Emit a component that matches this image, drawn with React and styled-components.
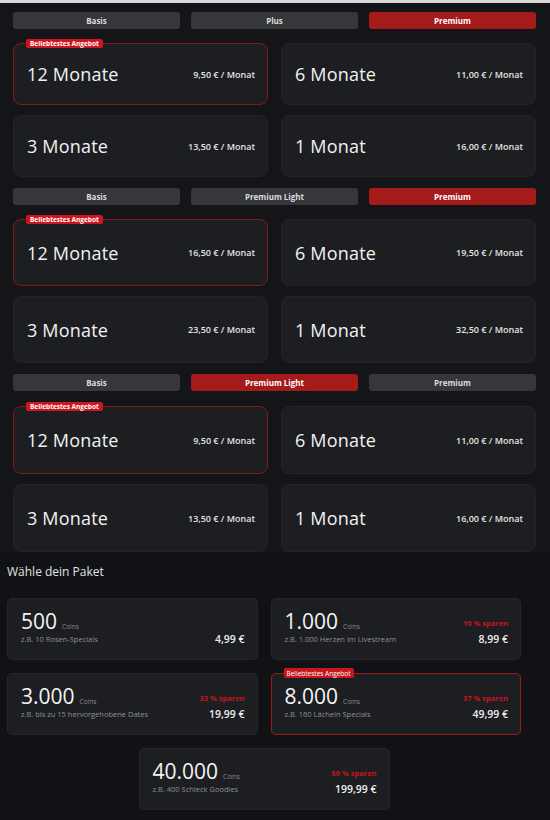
import React from "react";
import styled, { createGlobalStyle } from "styled-components";

const GlobalStyle = createGlobalStyle`
  html, body {
    margin: 0;
    padding: 0;
    background: #131417;
  }
  * {
    box-sizing: border-box;
  }
`;

const Page = styled.div`
  width: 550px;
  min-height: 820px;
  background: #141518;
  font-family: "Open Sans", "Liberation Sans", sans-serif;
  color: #f0f0f0;
`;

const TopStrip = styled.div`
  height: 3px;
  background: #d9d9d9;
`;

const PlanSection = styled.section`
  display: flex;
  flex-direction: column;
  gap: ${p => p.gap}px;
  padding: ${p => p.top}px 14px 0 13px;
`;

const Tabs = styled.div`
  display: grid;
  grid-template-columns: repeat(3, 1fr);
  gap: 11px;
`;

const Tab = styled.div`
  height: 17px;
  border-radius: 3px;
  background: ${p => (p.active ? "#a51b1b" : "#35373a")};
  color: ${p => (p.active ? "#ffffff" : "#dcdcdc")};
  font-size: 8px;
  font-weight: 700;
  display: flex;
  align-items: center;
  justify-content: center;
`;

const CardGrid = styled.div`
  display: grid;
  grid-template-columns: 1fr 1fr;
  column-gap: 13px;
  row-gap: 10px;
`;

const PlanCard = styled.div`
  position: relative;
  height: ${p => p.h}px;
  border-radius: 8px;
  background: #1c1e21;
  border: 1px solid ${p => (p.featured ? "#821a1a" : "#222427")};
  display: flex;
  align-items: center;
  justify-content: space-between;
  padding: 0 12px 0 13px;
`;

const Badge = styled.span`
  position: absolute;
  top: -5px;
  left: 12px;
  height: 9px;
  padding: 0 4px;
  border-radius: 2px;
  background: #cf161e;
  color: #fff;
  font-size: 6.5px;
  font-weight: 700;
  display: flex;
  align-items: center;
  white-space: nowrap;
`;

const Duration = styled.span`
  font-size: 18px;
  font-weight: 400;
  color: #f2f2f2;
  letter-spacing: 0.2px;
`;

const MonthPrice = styled.span`
  font-size: 9px;
  font-weight: 600;
  color: #e4e4e4;
`;

const CoinSection = styled.section`
  background: #111215;
  padding: 12px 29px 10px 7px;
`;

const Title = styled.h2`
  margin: 0 0 18px;
  font-size: 12px;
  line-height: 16px;
  font-weight: 400;
  color: #e2e2e2;
`;

const CoinGrid = styled.div`
  display: grid;
  grid-template-columns: 1fr 1fr;
  gap: 13px;
`;

const CoinCard = styled.div`
  position: relative;
  height: 62px;
  border-radius: 5px;
  background: #1c1e21;
  border: 1px solid ${p => (p.featured ? "#a11a1a" : "#25272a")};
  display: flex;
  justify-content: space-between;
  align-items: flex-end;
  padding: 0 12px 15px 13px;
  ${p => p.center && "grid-column: 1 / -1; justify-self: center; width: 251px;"}
`;

const CoinBadge = styled.span`
  position: absolute;
  top: -6px;
  left: 12px;
  height: 10px;
  padding: 0 3px;
  border-radius: 2px;
  background: #c8161e;
  color: #fff;
  font-size: 6.5px;
  display: flex;
  align-items: center;
  white-space: nowrap;
`;

const CoinLeft = styled.div`
  display: flex;
  flex-direction: column;
`;

const Amount = styled.div`
  display: flex;
  align-items: baseline;
  gap: 5px;
  line-height: 21px;
`;

const AmountNum = styled.span`
  font-size: 21px;
  line-height: 21px;
  color: #f4f4f4;
`;

const CoinsLabel = styled.span`
  font-size: 6.5px;
  line-height: 8px;
  color: #8a8c90;
`;

const Example = styled.span`
  font-size: 7.5px;
  line-height: 10px;
  color: #8d9095;
  margin-top: 2px;
`;

const CoinRight = styled.div`
  display: flex;
  flex-direction: column;
  align-items: flex-end;
  gap: 4px;
  margin-bottom: -2px;
`;

const Save = styled.span`
  font-size: 7.5px;
  line-height: 10px;
  font-weight: 700;
  color: #c8161e;
`;

const Price = styled.span`
  font-size: 10.5px;
  line-height: 14px;
  font-weight: 600;
  color: #eeeeee;
`;

const plans = [
  {
    tabs: ["Basis", "Plus", "Premium"],
    active: 2,
    top: 9,
    gap: 14,
    h: 62,
    prices: ["9,50", "11,00", "13,50", "16,00"]
  },
  {
    tabs: ["Basis", "Premium Light", "Premium"],
    active: 2,
    top: 11,
    gap: 14,
    h: 67,
    prices: ["16,50", "19,50", "23,50", "32,50"]
  },
  {
    tabs: ["Basis", "Premium Light", "Premium"],
    active: 1,
    top: 11,
    gap: 15,
    h: 68,
    prices: ["9,50", "11,00", "13,50", "16,00"]
  }
];

const durations = ["12 Monate", "6 Monate", "3 Monate", "1 Monat"];

const coins = [
  { amount: "500", example: "z.B. 10 Rosen-Specials", price: "4,99 €" },
  { amount: "1.000", example: "z.B. 1.000 Herzen im Livestream", save: "10 % sparen", price: "8,99 €" },
  { amount: "3.000", example: "z.B. bis zu 15 hervorgehobene Dates", save: "33 % sparen", price: "19,99 €" },
  { amount: "8.000", example: "z.B. 160 Lächeln Specials", save: "37 % sparen", price: "49,99 €", featured: true },
  { amount: "40.000", example: "z.B. 400 Schleck Goodies", save: "50 % sparen", price: "199,99 €", center: true }
];

const App = () => {
  return (
    <Page>
      <GlobalStyle />
      <TopStrip />
      {plans.map((plan, i) => (
        <PlanSection key={i} top={plan.top} gap={plan.gap}>
          <Tabs>
            {plan.tabs.map((t, j) => (
              <Tab key={t} active={j === plan.active}>
                {t}
              </Tab>
            ))}
          </Tabs>
          <CardGrid>
            {durations.map((d, j) => (
              <PlanCard key={d} h={plan.h} featured={j === 0}>
                {j === 0 && <Badge>Beliebtestes Angebot</Badge>}
                <Duration>{d}</Duration>
                <MonthPrice>{plan.prices[j]} € / Monat</MonthPrice>
              </PlanCard>
            ))}
          </CardGrid>
        </PlanSection>
      ))}
      <CoinSection>
        <Title>Wähle dein Paket</Title>
        <CoinGrid>
          {coins.map(c => (
            <CoinCard key={c.amount} featured={c.featured} center={c.center}>
              {c.featured && <CoinBadge>Beliebtestes Angebot</CoinBadge>}
              <CoinLeft>
                <Amount>
                  <AmountNum>{c.amount}</AmountNum>
                  <CoinsLabel>Coins</CoinsLabel>
                </Amount>
                <Example>{c.example}</Example>
              </CoinLeft>
              <CoinRight>
                {c.save && <Save>{c.save}</Save>}
                <Price>{c.price}</Price>
              </CoinRight>
            </CoinCard>
          ))}
        </CoinGrid>
      </CoinSection>
    </Page>
  );
};

export default App;
